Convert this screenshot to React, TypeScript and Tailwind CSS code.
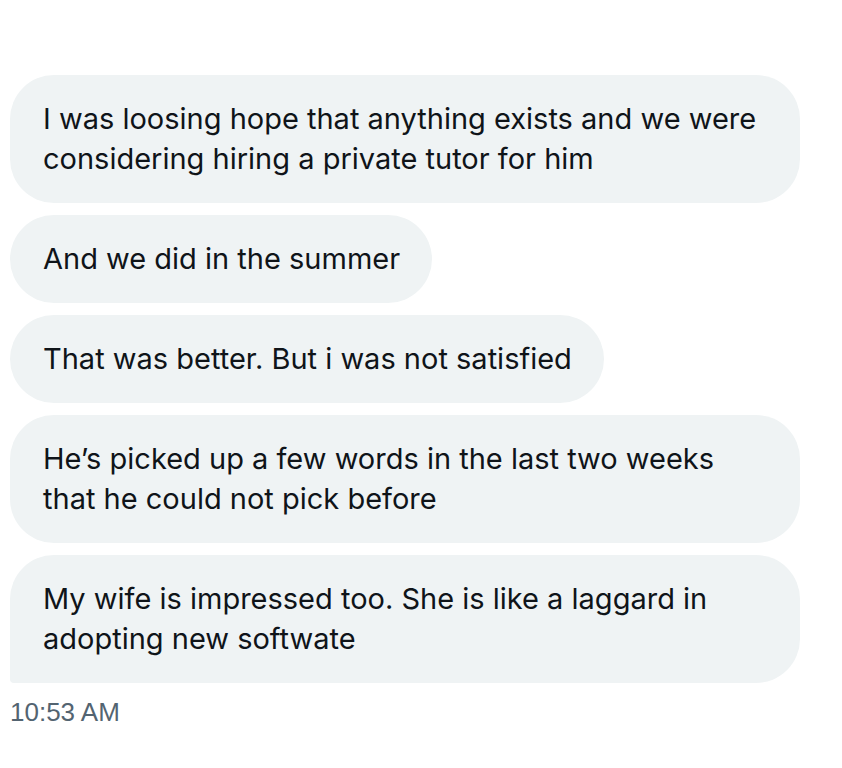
import React from 'react';

const messages = [
  'I was loosing hope that anything exists and we were considering hiring a private tutor for him',
  'And we did in the summer',
  'That was better. But i was not satisfied',
  'He’s picked up a few words in the last two weeks that he could not pick before',
  'My wife is impressed too. She is like a laggard in adopting new softwate',
];

const Bubble = ({ text, last }: { text: string; last?: boolean }) => (
  <div
    className={`max-w-[790px] self-start bg-[#eff3f4] text-[#0f1419] text-[29px] leading-[40px] pl-[33px] pr-[32px] py-[24px] rounded-[44px] ${
      last ? 'rounded-bl-[4px]' : ''
    }`}
    style={{ fontFamily: 'Inter, "Noto Sans", sans-serif' }}
  >
    {text}
  </div>
);

export default function App() {
  return (
    <div className="min-h-[768px] w-[842px] bg-white pt-[75px] px-[10px]">
      <div className="flex flex-col gap-[12px]">
        {messages.map((m, i) => (
          <Bubble key={i} text={m} last={i === messages.length - 1} />
        ))}
      </div>
      <div
        className="mt-[14px] text-[26px] leading-[30px] text-[#536471]"
        style={{ fontFamily: '"Liberation Sans", Arial, sans-serif' }}
      >
        10:53 AM
      </div>
    </div>
  );
}
